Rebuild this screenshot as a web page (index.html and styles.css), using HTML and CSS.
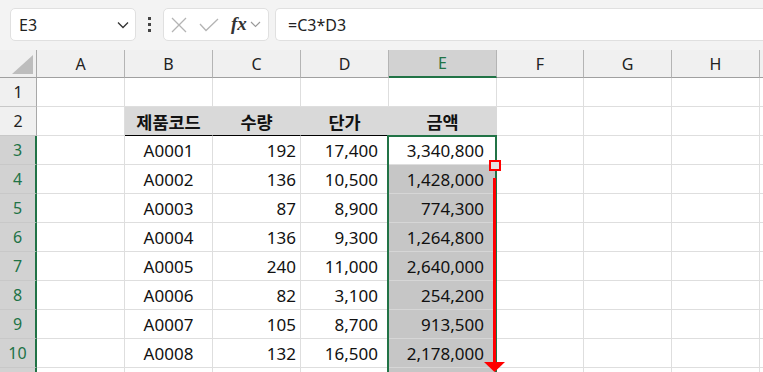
FILE: index.html
```html
<!DOCTYPE html>
<html lang="ko">
<head>
    <meta charset="UTF-8">
    <meta name="viewport" content="width=device-width, initial-scale=1.0">
    <title>Sheet</title>
    <link rel="stylesheet" href="styles.css">
</head>
<body>
    <div class="toolbar">
        <div class="namebox">
            <span>E3</span>
            <svg width="12" height="8" viewBox="0 0 12 8"><path d="M1 1.5 L6 6.5 L11 1.5" fill="none" stroke="#333" stroke-width="1.3"/></svg>
        </div>
        <div class="grip"><i></i><i></i><i></i></div>
        <div class="fxbox">
            <svg width="16" height="16" viewBox="0 0 16 16"><path d="M1 1 L15 15 M15 1 L1 15" stroke="#b4b4b4" stroke-width="1.3"/></svg>
            <svg width="20" height="14" viewBox="0 0 20 14"><path d="M1 6 L7 12.5 L19 1" fill="none" stroke="#b4b4b4" stroke-width="1.3"/></svg>
            <span class="fx">fx</span>
            <svg width="11" height="7" viewBox="0 0 11 7"><path d="M1 1 L5.5 5.5 L10 1" fill="none" stroke="#999" stroke-width="1.1"/></svg>
        </div>
        <div class="formula">=C3*D3</div>
    </div>

    <div class="sheet">
        <div class="c corner"><div class="tri"></div></div>
        <div class="c ch">A</div>
        <div class="c ch">B</div>
        <div class="c ch">C</div>
        <div class="c ch">D</div>
        <div class="c ch sel">E</div>
        <div class="c ch">F</div>
        <div class="c ch">G</div>
        <div class="c ch">H</div>
        <div class="c ch"></div>

        <div class="c rh">1</div>
        <div class="c"></div><div class="c"></div><div class="c"></div><div class="c"></div><div class="c"></div><div class="c"></div><div class="c"></div><div class="c"></div><div class="c"></div>

        <div class="c rh">2</div>
        <div class="c"></div>
        <div class="c hd">제품코드</div>
        <div class="c hd">수량</div>
        <div class="c hd">단가</div>
        <div class="c hd">금액</div>
        <div class="c"></div><div class="c"></div><div class="c"></div><div class="c"></div>

        <div class="c rh sel">3</div>
        <div class="c"></div>
        <div class="c ctr">A0001</div>
        <div class="c num">192</div>
        <div class="c num cm">17,400</div>
        <div class="c num cm amt">3,340,800</div>
        <div class="c"></div><div class="c"></div><div class="c"></div><div class="c"></div>

        <div class="c rh sel">4</div>
        <div class="c"></div>
        <div class="c ctr">A0002</div>
        <div class="c num">136</div>
        <div class="c num cm">10,500</div>
        <div class="c num cm amt fill">1,428,000</div>
        <div class="c"></div><div class="c"></div><div class="c"></div><div class="c"></div>

        <div class="c rh sel">5</div>
        <div class="c"></div>
        <div class="c ctr">A0003</div>
        <div class="c num">87</div>
        <div class="c num cm">8,900</div>
        <div class="c num cm amt fill">774,300</div>
        <div class="c"></div><div class="c"></div><div class="c"></div><div class="c"></div>

        <div class="c rh sel">6</div>
        <div class="c"></div>
        <div class="c ctr">A0004</div>
        <div class="c num">136</div>
        <div class="c num cm">9,300</div>
        <div class="c num cm amt fill">1,264,800</div>
        <div class="c"></div><div class="c"></div><div class="c"></div><div class="c"></div>

        <div class="c rh sel">7</div>
        <div class="c"></div>
        <div class="c ctr">A0005</div>
        <div class="c num">240</div>
        <div class="c num cm">11,000</div>
        <div class="c num cm amt fill">2,640,000</div>
        <div class="c"></div><div class="c"></div><div class="c"></div><div class="c"></div>

        <div class="c rh sel">8</div>
        <div class="c"></div>
        <div class="c ctr">A0006</div>
        <div class="c num">82</div>
        <div class="c num cm">3,100</div>
        <div class="c num cm amt fill">254,200</div>
        <div class="c"></div><div class="c"></div><div class="c"></div><div class="c"></div>

        <div class="c rh sel">9</div>
        <div class="c"></div>
        <div class="c ctr">A0007</div>
        <div class="c num">105</div>
        <div class="c num cm">8,700</div>
        <div class="c num cm amt fill">913,500</div>
        <div class="c"></div><div class="c"></div><div class="c"></div><div class="c"></div>

        <div class="c rh sel">10</div>
        <div class="c"></div>
        <div class="c ctr">A0008</div>
        <div class="c num">132</div>
        <div class="c num cm">16,500</div>
        <div class="c num cm amt fill">2,178,000</div>
        <div class="c"></div><div class="c"></div><div class="c"></div><div class="c"></div>

        <div class="c rh sel"></div>
        <div class="c"></div><div class="c"></div><div class="c"></div><div class="c"></div><div class="c fill"></div><div class="c"></div><div class="c"></div><div class="c"></div><div class="c"></div>

        <!-- selection range and fill-drag hint -->
        <div class="selection"></div>
        <div class="handle"></div>
        <svg class="drag" width="22" height="194" viewBox="0 0 22 194">
            <rect x="9" y="0" width="3" height="186" fill="#f00"/>
            <path d="M0 184 L21 184 L10.5 194 Z" fill="#f00"/>
        </svg>
    </div>
</body>
</html>
```

FILE: styles.css
```css
body {
    margin: 0;
    background: #ffffff;
    font-family: "Noto Sans", "Noto Sans CJK KR", sans-serif;
    overflow: hidden;
}

/* formula bar */
.toolbar {
    height: 50px;
    box-sizing: border-box;
    padding: 8px 0 9px 10px;
    background: #f3f3f3;
    display: flex;
    align-items: stretch;
}

.namebox {
    width: 126px;
    box-sizing: border-box;
    background: white;
    border: 1px solid #e0e0e0;
    border-radius: 5px;
    display: flex;
    align-items: center;
    justify-content: space-between;
    padding: 0 6px 0 8px;
    font-size: 16px;
    color: #222;
}

.grip {
    width: 27px;
    display: flex;
    flex-direction: column;
    align-items: center;
    justify-content: center;
    gap: 3px;
}

.grip i {
    display: block;
    width: 3px;
    height: 3px;
    background: #444;
}

.fxbox {
    width: 106px;
    box-sizing: border-box;
    background: white;
    border: 1px solid #e0e0e0;
    border-radius: 5px;
    display: flex;
    align-items: center;
    padding: 0 0 0 7px;
}

.fxbox svg:first-child {
    margin-right: 12px;
}

.fxbox .fx {
    font-family: "Liberation Serif", serif;
    font-style: italic;
    font-weight: bold;
    font-size: 19px;
    color: #333;
    margin: 0 3px 2px 12px;
}

.formula {
    flex: 1;
    margin-left: 6px;
    background: white;
    border: 1px solid #e0e0e0;
    border-right: none;
    border-radius: 5px 0 0 5px;
    display: flex;
    align-items: center;
    padding-left: 12px;
    font-size: 16px;
    color: #222;
}

/* grid */
.sheet {
    position: relative;
    height: 322px;
    overflow: hidden;
    display: grid;
    grid-template-columns: 37px 88px 88px 88px 88px 108px 87px 88px 88px 3px;
    grid-template-rows: 28px;
    grid-auto-rows: 29px;
}

.c {
    box-sizing: border-box;
    border-right: 1px solid #dedede;
    border-bottom: 1px solid #dedede;
    display: flex;
    align-items: center;
    padding: 0 4px;
    font-size: 17px;
    color: #111;
    white-space: nowrap;
}

.corner {
    background: #f0f0f0;
    border-right: 1px solid #a8a8a8;
    border-bottom: 1px solid #a0a0a0;
    justify-content: flex-end;
    align-items: flex-end;
    padding: 0 3px 3px 0;
}

.tri {
    width: 21px;
    height: 19px;
    background: #bdbdbd;
    clip-path: polygon(100% 0, 100% 100%, 0 100%);
}

.ch {
    background: #f0f0f0;
    border-right: 1px solid #b4b4b4;
    border-bottom: 1px solid #a0a0a0;
    justify-content: center;
    font-size: 16px;
    color: #222;
}

.ch.sel {
    background: #d2d2d2;
    border-bottom: 2px solid #217346;
    color: #217346;
}

.rh {
    background: #f0f0f0;
    border-right: 1px solid #a8a8a8;
    border-bottom: 1px solid #c8c8c8;
    justify-content: center;
    padding: 0;
    font-size: 16px;
    color: #222;
}

.rh.sel {
    background: #d2d2d2;
    border-right: 2px solid #217346;
    color: #217346;
}

.hd {
    background: #d9d9d9;
    border-right-color: #d9d9d9;
    border-bottom: 1px solid #000;
    justify-content: center;
    font-weight: bold;
    font-size: 17.5px;
}

.ctr {
    justify-content: center;
}

.num {
    justify-content: flex-end;
}

.cm {
    padding-right: 10px;
}

.amt {
    padding-right: 12px;
}

.fill {
    background: #c6c6c6;
    border-bottom-color: #d6d6d6;
}

.selection {
    position: absolute;
    left: 387px;
    top: 85px;
    width: 110px;
    height: 240px;
    box-sizing: border-box;
    border: 2px solid #217346;
}

.handle {
    position: absolute;
    left: 489px;
    top: 110px;
    width: 12px;
    height: 11px;
    box-sizing: border-box;
    border: 2px solid #f00;
    background: #e4e4e4;
}

.drag {
    position: absolute;
    left: 484px;
    top: 128px;
}
```
